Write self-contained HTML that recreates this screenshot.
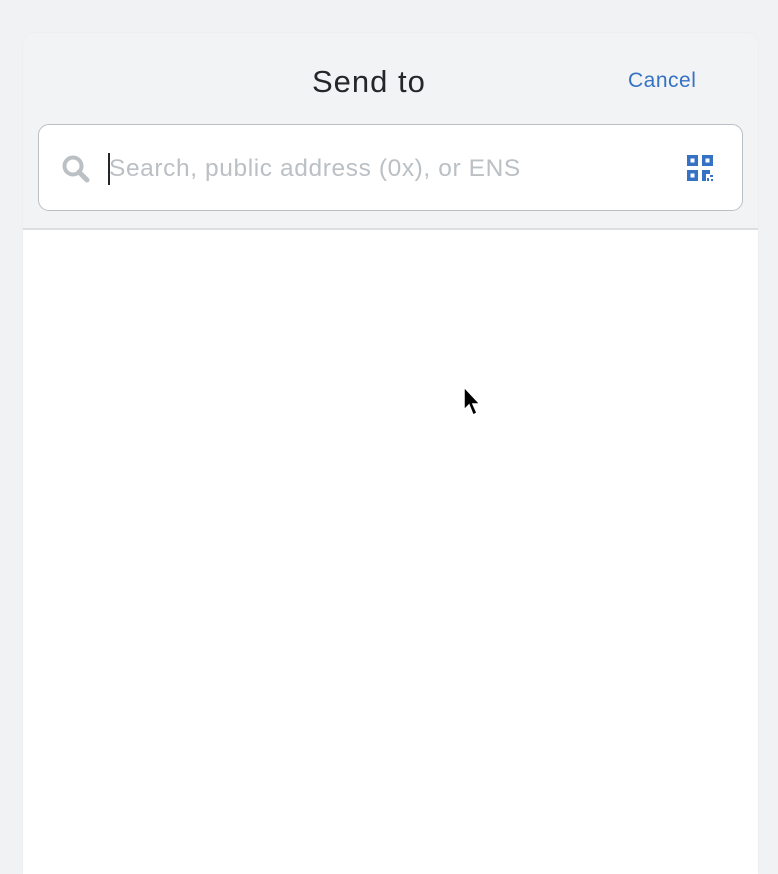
<!DOCTYPE html>
<html><head><style>
html,body{margin:0;width:778px;height:874px;overflow:hidden}
body{background:#f1f2f4;font-family:"Liberation Sans",sans-serif;position:relative}
.card{position:absolute;left:23px;top:33px;width:735px;height:841px;background:#fff;border-radius:12px 12px 0 0;overflow:hidden;box-shadow:0 0 2px rgba(0,0,0,0.05)}
.head{position:absolute;left:0;top:0;width:735px;height:195px;background:#f2f3f5;border-bottom:2px solid #dcdee2}
.title{position:absolute;left:289px;top:31px;font-size:31px;letter-spacing:1px;color:#24272a}
.cancel{position:absolute;left:605px;top:36px;font-size:21px;letter-spacing:0.5px;color:#3572c4}
.inp{position:absolute;left:15px;top:91px;width:703px;height:85px;border:1.5px solid #bbc0c5;border-radius:11px;background:#fff}
.ph{position:absolute;left:70px;top:30px;font-size:24.5px;letter-spacing:0.6px;color:#bbc0c5}
.caret{position:absolute;left:69px;top:28px;width:2px;height:32px;background:#24272a}
</style></head><body>
<div class="card">
<div class="head">
<div class="title">Send to</div>
<div class="cancel">Cancel</div>
<div class="inp">
<svg style="position:absolute;left:22px;top:29px" width="30" height="30" viewBox="0 0 30 30"><circle cx="12" cy="12" r="8.5" fill="none" stroke="#bbc0c5" stroke-width="4"/><path d="M18 18 L26 26" stroke="#bbc0c5" stroke-width="5" stroke-linecap="round"/></svg>
<div class="caret"></div>
<div class="ph">Search, public address (0x), or ENS</div>
<svg style="position:absolute;left:648px;top:30px" width="27" height="27" viewBox="0 0 27 27" fill="#3572c4">
<path fill-rule="evenodd" d="M0 0h11v11H0zM3.5 3.5v4h4v-4z"/>
<path fill-rule="evenodd" d="M15 0h11v11H15zM18.5 3.5v4h4v-4z"/>
<path fill-rule="evenodd" d="M0 15h11v11H0zM3.5 18.5v4h4v-4z"/>
<path d="M15 15h4v11h-4zM19 15h4v4h-4zM23 20h3v2h-3zM20 23h2v3h-2zM24 24h2v2h-2z"/>
</svg>
</div>
</div>
</div>
<svg style="position:absolute;left:463px;top:386px" width="20" height="32" viewBox="0 0 20 32"><path d="M1 1 L1 24 L6 19 L10 29 L14 27 L10 18 L17 18 Z" fill="#000" stroke="#fff" stroke-width="1.5"/></svg>
</body></html>
